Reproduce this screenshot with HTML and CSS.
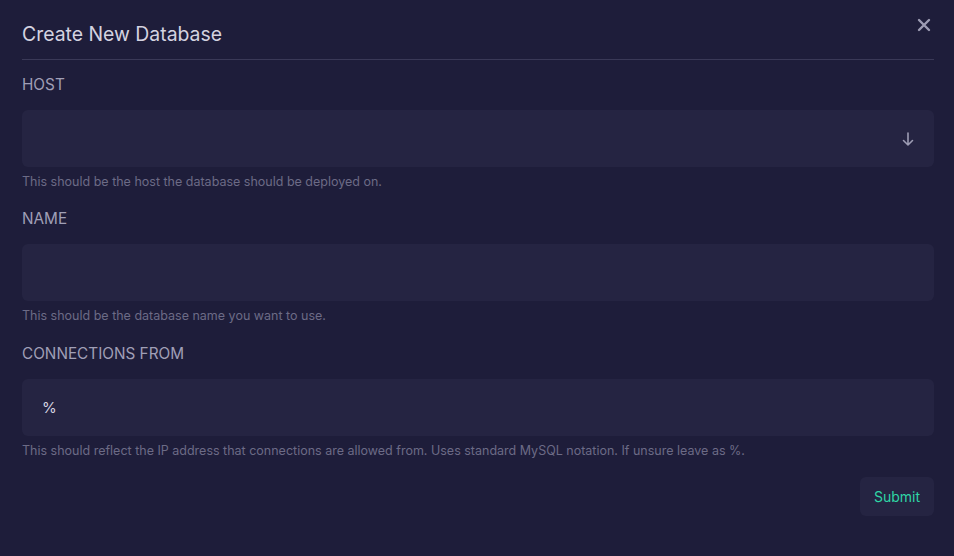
FILE: index.html
```html
<!DOCTYPE html>
<html lang="en">
<head>
  <meta charset="UTF-8" />
  <meta name="viewport" content="width=device-width, initial-scale=1" />
  <title>Create New Database</title>
  <link rel="stylesheet" href="styles.css">
</head>
<body>
  <div class="modal">
    <div class="cabecalho">
      <div class="titulo">Create New Database</div>
      <button class="fechar" aria-label="Close">
        <svg width="14" height="14" viewBox="0 0 14 14"><path d="M2 2L12 12M12 2L2 12" stroke="currentColor" stroke-width="2.4" stroke-linecap="round"/></svg>
      </button>
    </div>

    <div class="campo">
      <label class="rotulo">HOST</label>
      <div class="caixa">
        <span></span>
        <svg class="seta" width="14" height="16" viewBox="0 0 14 16"><path d="M7 2V14M2.5 9.5L7 14L11.5 9.5" fill="none" stroke="currentColor" stroke-width="1.6" stroke-linecap="round" stroke-linejoin="round"/></svg>
      </div>
      <div class="ajuda">This should be the host the database should be deployed on.</div>
    </div>

    <div class="campo">
      <label class="rotulo">NAME</label>
      <div class="caixa"></div>
      <div class="ajuda">This should be the database name you want to use.</div>
    </div>

    <div class="campo campo-ultimo">
      <label class="rotulo">CONNECTIONS FROM</label>
      <div class="caixa"><span class="valor">%</span></div>
      <div class="ajuda">This should reflect the IP address that connections are allowed from. Uses standard MySQL notation. If unsure leave as %.</div>
    </div>

    <div class="rodape">
      <button class="botao">Submit</button>
    </div>
  </div>
</body>
</html>
```

FILE: styles.css
```css
body {
  background: #1e1d3a;
  font-family: Inter, "Noto Sans", sans-serif;
  margin: 0;
  padding: 0;
}

.modal {
  padding: 0 20px 0 22px;
}

.cabecalho {
  display: flex;
  justify-content: space-between;
  align-items: flex-start;
  padding-top: 21px;
  padding-bottom: 12px;
  border-bottom: 1px solid #3a3957;
}

.titulo {
  font-size: 19.4px;
  line-height: 26px;
  color: #d4d3e0;
}

.fechar {
  background: none;
  border: none;
  color: #9d9cb3;
  padding: 0;
  margin-top: -3px;
  margin-right: 3px;
  cursor: pointer;
}

.campo {
  margin-top: 15px;
}

.campo + .campo {
  margin-top: 19px;
}

.campo-ultimo {
  margin-top: 20px !important;
}

.rotulo {
  display: block;
  font-size: 15.3px;
  line-height: 20px;
  color: #a09fb6;
  margin-bottom: 15px;
}

.caixa {
  display: flex;
  align-items: center;
  justify-content: space-between;
  height: 57px;
  padding: 0 20px;
  background: #252442;
  border-radius: 6px;
}

.valor {
  font-size: 15px;
  color: #d4d3e0;
}

.seta {
  color: #9d9cb3;
  margin-right: -1px;
}

.ajuda {
  font-size: 12.5px;
  line-height: 17px;
  color: #6c6b86;
  margin-top: 6px;
}

.rodape {
  display: flex;
  justify-content: flex-end;
  margin-top: 18px;
}

.botao {
  background: #252442;
  color: #2fd6a6;
  font-family: inherit;
  font-size: 14px;
  height: 39px;
  padding: 0 14px;
  border: none;
  border-radius: 6px;
  cursor: pointer;
}
```
